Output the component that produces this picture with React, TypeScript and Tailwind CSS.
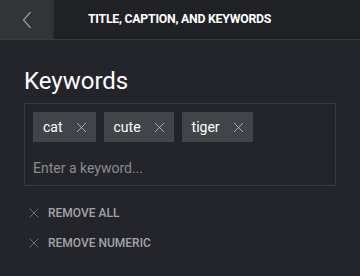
import { X } from "lucide-react"

const keywords = ["cat", "cute", "tiger"]

function Chevron() {
  return (
    <svg width="10" height="18" viewBox="0 0 10 18" fill="none">
      <path d="M8.5 1 L1.5 9 L8.5 17" stroke="#9a9ba0" strokeWidth="1.2" />
    </svg>
  )
}

export default function App() {
  return (
    <div
      className="w-[360px] h-[276px] overflow-hidden bg-[#24252a] text-white"
      style={{ fontFamily: "Roboto, 'Noto Sans', sans-serif" }}
    >
      {/* Header */}
      <div className="flex h-[40px] border-b border-[#3a3b40] bg-[#202125]">
        <button className="flex w-[54px] items-center justify-center border-r border-[#2c2d31] bg-[#333438]">
          <Chevron />
        </button>
        <div className="flex flex-1 items-center pl-[34px] text-[12.3px] font-bold tracking-[-0.25px] text-white">
          TITLE, CAPTION, AND KEYWORDS
        </div>
      </div>

      <div className="px-[24px] pt-[26px]">
        <h1 className="text-[24px] font-normal leading-[30px] text-white">Keywords</h1>

        {/* Keyword box */}
        <div className="mt-[7px] h-[83px] w-[312px] border border-[#393a3f] px-[8px] pt-[8px]">
          <div className="flex gap-[8px]">
            {keywords.map((k) => (
              <div
                key={k}
                className="flex h-[30px] items-center gap-[10px] bg-[#414448] pl-[10px] pr-[6px] text-[14px] text-white"
              >
                <span>{k}</span>
                <X size={17} strokeWidth={1.1} className="text-[#c4c5c8]" />
              </div>
            ))}
          </div>
          <div className="mt-[16px] text-[14px] text-[#8b8c90]">Enter a keyword...</div>
        </div>

        {/* Actions */}
        <div className="mt-[18px] flex flex-col gap-[12px] pl-[2px]">
          {["REMOVE ALL", "REMOVE NUMERIC"].map((label) => (
            <button key={label} className="flex items-center gap-[6px] text-[12px] font-medium text-[#a2a3a8]">
              <X size={16} strokeWidth={1.1} className="text-[#8b8c90]" />
              {label}
            </button>
          ))}
        </div>
      </div>
    </div>
  )
}
